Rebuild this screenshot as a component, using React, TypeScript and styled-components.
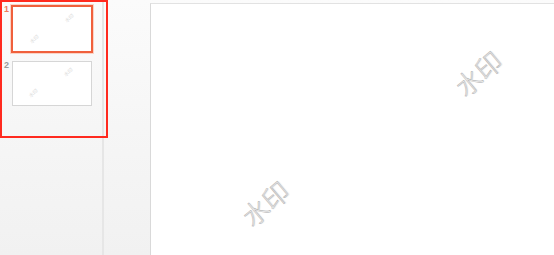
import React from "react";
import styled, { createGlobalStyle } from "styled-components";

const Global = createGlobalStyle`
  html, body { margin: 0; padding: 0; background: #f4f4f4; }
  body { font-family: "Liberation Sans", "Noto Sans CJK SC", sans-serif; }
`;

const Frame = styled.div`
  position: relative;
  display: flex;
  width: 554px;
  height: 255px;
  overflow: hidden;
`;

const Sidebar = styled.div`
  width: 104px;
  flex: none;
  display: flex;
  flex-direction: column;
  gap: 8px;
  padding: 5px 0 0 4px;
  box-sizing: border-box;
  background: linear-gradient(#fbfbfb, #f1f1f1);
  border-right: 2px solid #e6e6e6;
`;

const ThumbRow = styled.div`
  display: flex;
  align-items: flex-start;
  gap: 1px;
`;

const Num = styled.span<{ $active?: boolean }>`
  width: 6px;
  font-size: 9px;
  line-height: 9px;
  font-weight: bold;
  color: ${(p) => (p.$active ? "#f07a5a" : "#9a9a9a")};
`;

const Thumb = styled.div<{ $active?: boolean }>`
  position: relative;
  width: ${(p) => (p.$active ? "82px" : "80px")};
  height: ${(p) => (p.$active ? "48px" : "45px")};
  box-sizing: border-box;
  background: #fff;
  border: ${(p) => (p.$active ? "2px solid #f0603c" : "1px solid #d6d6d6")};
  box-shadow: ${(p) => (p.$active ? "0 0 0 1px #fbd3c6" : "none")};
  margin-left: ${(p) => (p.$active ? "0" : "1px")};
`;

const TinyMark = styled.span<{ $x: number; $y: number }>`
  position: absolute;
  left: ${(p) => p.$x}px;
  top: ${(p) => p.$y}px;
  font-family: "Noto Sans CJK SC", sans-serif;
  font-size: 5px;
  line-height: 5px;
  color: #dadada;
  transform: rotate(-40deg);
  white-space: nowrap;
`;

const Main = styled.div`
  flex: 1;
  display: flex;
  padding: 3px 0 0 46px;
  background: linear-gradient(#fbfbfb, #f1f1f1);
`;

const Slide = styled.div`
  position: relative;
  flex: 1;
  background: #fff;
  border-left: 1px solid #d9d9d9;
  border-top: 1px solid #e2e2e2;
`;

const Mark = styled.span<{ $cx: number; $cy: number }>`
  position: absolute;
  left: ${(p) => p.$cx}px;
  top: ${(p) => p.$cy}px;
  font-family: "Noto Sans CJK SC", sans-serif;
  font-size: 26px;
  line-height: 28px;
  font-weight: 300;
  color: #f0f0f0;
  -webkit-text-stroke: 0.45px #a8a8a8;
  text-shadow: 1px 1px 1px rgba(0, 0, 0, 0.08);
  transform: translate(-50%, -50%) rotate(-40deg);
  white-space: nowrap;
`;

const Annotation = styled.div`
  position: absolute;
  left: 0;
  top: 0;
  width: 108px;
  height: 138px;
  box-sizing: border-box;
  border: 2px solid #ff2a1f;
  pointer-events: none;
`;

export default function App() {
  return (
    <>
      <Global />
      <Frame>
        <Sidebar>
          <ThumbRow>
            <Num $active>1</Num>
            <Thumb $active>
              <TinyMark $x={51} $y={8}>水印</TinyMark>
              <TinyMark $x={16} $y={29}>水印</TinyMark>
            </Thumb>
          </ThumbRow>
          <ThumbRow>
            <Num>2</Num>
            <Thumb>
              <TinyMark $x={50} $y={7}>水印</TinyMark>
              <TinyMark $x={15} $y={28}>水印</TinyMark>
            </Thumb>
          </ThumbRow>
        </Sidebar>
        <Main>
          <Slide>
            <Mark $cx={327} $cy={69}>水印</Mark>
            <Mark $cx={114} $cy={199}>水印</Mark>
          </Slide>
        </Main>
        <Annotation />
      </Frame>
    </>
  );
}
